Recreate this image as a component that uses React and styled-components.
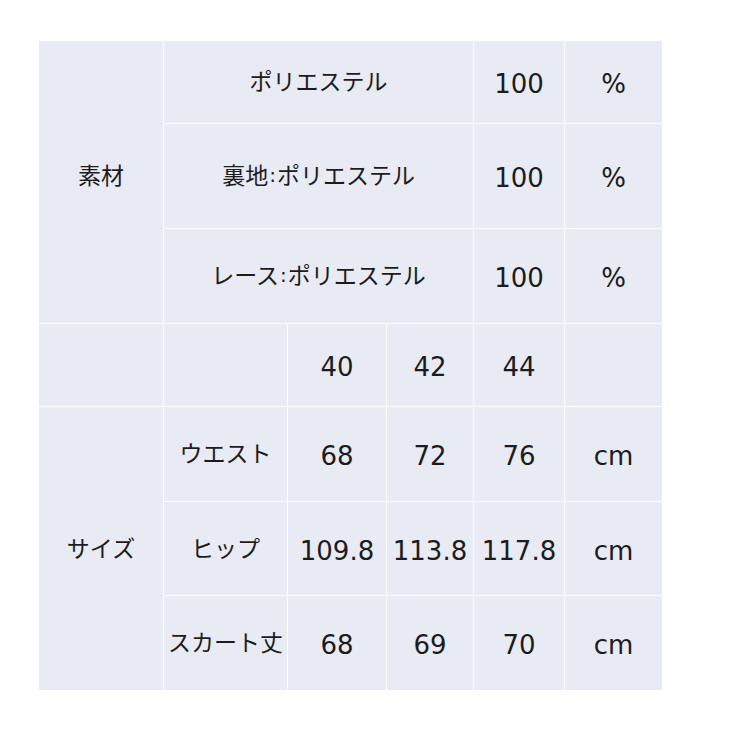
import React from "react";
import styled, { createGlobalStyle } from "styled-components";

const Global = createGlobalStyle`
  html, body { margin: 0; padding: 0; background: #ffffff; }
`;

const Page = styled.div`
  padding: 41px 0 0 39px;
`;

const Grid = styled.div`
  display: grid;
  width: 623px;
  grid-template-columns: 124px 123px 98px 86px 90px 97px;
  grid-template-rows: 82px 104px 94px 82px 94px 93px 94px;
  gap: 1px;
  background: #ffffff;
`;

const Cell = styled.div`
  background: #e8eaf4;
  display: flex;
  align-items: center;
  justify-content: center;
  color: #1c1c1c;
  white-space: nowrap;
  line-height: 1;
  font-family: ${(p) =>
    p.$num
      ? '"DejaVu Sans", "Noto Sans CJK JP", sans-serif'
      : '"Noto Sans CJK JP", "Noto Sans", sans-serif'};
  font-size: ${(p) => (p.$num ? "26px" : "23px")};
  padding-top: ${(p) => (p.$num ? "4px" : "0")};
  padding-bottom: ${(p) => (p.$num ? "0" : `${p.$lift ?? 3}px`)};
  grid-column: ${(p) => p.$col || "auto"};
  grid-row: ${(p) => p.$row || "auto"};
`;

const Colon = styled.span`
  font-family: "DejaVu Sans", sans-serif;
  font-size: 20px;
  margin: 0 1px;
`;

const J = ({ children, ...rest }) => <Cell {...rest}>{children}</Cell>;
const N = ({ children, ...rest }) => (
  <Cell $num {...rest}>
    {children}
  </Cell>
);

export default function App() {
  return (
    <>
      <Global />
      <Page>
        <Grid>
          <J $col="1" $row="1 / span 3" $lift={16}>素材</J>
          <J $col="2 / span 3" $row="1">ポリエステル</J>
          <N $col="5" $row="1">100</N>
          <N $col="6" $row="1">%</N>

          <J $col="2 / span 3" $row="2">
            裏地<Colon>:</Colon>ポリエステル
          </J>
          <N $col="5" $row="2">100</N>
          <N $col="6" $row="2">%</N>

          <J $col="2 / span 3" $row="3">
            レース<Colon>:</Colon>ポリエステル
          </J>
          <N $col="5" $row="3">100</N>
          <N $col="6" $row="3">%</N>

          <J $col="1" $row="4" />
          <J $col="2" $row="4" />
          <N $col="3" $row="4">40</N>
          <N $col="4" $row="4">42</N>
          <N $col="5" $row="4">44</N>
          <N $col="6" $row="4" />

          <J $col="1" $row="5 / span 3">サイズ</J>
          <J $col="2" $row="5">ウエスト</J>
          <N $col="3" $row="5">68</N>
          <N $col="4" $row="5">72</N>
          <N $col="5" $row="5">76</N>
          <N $col="6" $row="5">cm</N>

          <J $col="2" $row="6">ヒップ</J>
          <N $col="3" $row="6">109.8</N>
          <N $col="4" $row="6">113.8</N>
          <N $col="5" $row="6">117.8</N>
          <N $col="6" $row="6">cm</N>

          <J $col="2" $row="7">スカート丈</J>
          <N $col="3" $row="7">68</N>
          <N $col="4" $row="7">69</N>
          <N $col="5" $row="7">70</N>
          <N $col="6" $row="7">cm</N>
        </Grid>
      </Page>
    </>
  );
}
